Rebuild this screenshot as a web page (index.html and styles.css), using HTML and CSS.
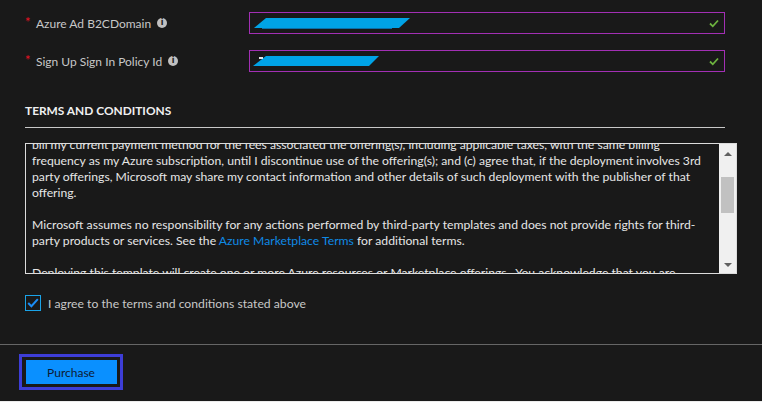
FILE: index.html
```html
<!DOCTYPE html>
<html>
<head>
<meta charset="utf-8">
<link rel="stylesheet" href="styles.css">
</head>
<body>
<div class="page">
  <div class="fields">
    <div class="row">
      <div class="label"><span class="req">*</span><span>Azure Ad B2CDomain</span><span class="info">i</span></div>
      <div class="input">
        <svg class="redact" width="160" height="14" viewBox="0 0 160 14"><polygon points="12,1 156,1 145,11 0,11" fill="#00a3e6"/><rect x="8" y="11" width="130" height="1" fill="#0b6fa8"/></svg>
        <svg class="check" width="10" height="9" viewBox="0 0 10 9"><path d="M1 4.5 L3.8 7.3 L9 1.5" fill="none" stroke="#6db33f" stroke-width="1.8"/></svg>
      </div>
    </div>
    <div class="row">
      <div class="label"><span class="req">*</span><span>Sign Up Sign In Policy Id</span><span class="info">i</span></div>
      <div class="input">
        <svg class="redact r2" width="130" height="14" viewBox="0 0 130 14"><polygon points="13,1 126,1 116,11 0,11" fill="#00a3e6"/><rect x="6" y="2" width="4" height="2" fill="#e6e6e6"/></svg>
        <svg class="check" width="10" height="9" viewBox="0 0 10 9"><path d="M1 4.5 L3.8 7.3 L9 1.5" fill="none" stroke="#6db33f" stroke-width="1.8"/></svg>
      </div>
    </div>
  </div>

  <div class="section-title">TERMS AND CONDITIONS</div>

  <div class="terms">
    <div class="terms-text">
      <p>bill my current payment method for the fees associated the offering(s), including applicable taxes, with the same billing<br>frequency as my Azure subscription, until I discontinue use of the offering(s); and (c) agree that, if the deployment involves 3rd<br>party offerings, Microsoft may share my contact information and other details of such deployment with the publisher of that<br>offering.</p>
      <p>Microsoft assumes no responsibility for any actions performed by third-party templates and does not provide rights for third-<br>party products or services. See the <a href="#">Azure Marketplace Terms</a> for additional terms.</p>
      <p>Deploying this template will create one or more Azure resources or Marketplace offerings.&nbsp; You acknowledge that you are<br>responsible for reviewing the applicable pricing and legal terms associated with all resources and offerings deployed.</p>
    </div>
    <div class="scrollbar">
      <span class="arrow up"></span>
      <span class="thumb"></span>
      <span class="arrow down"></span>
    </div>
  </div>

  <label class="agree">
    <span class="box"><svg width="12" height="10" viewBox="0 0 12 10"><path d="M1.2 5 L4.4 8.2 L10.8 1.2" fill="none" stroke="#1b8df5" stroke-width="2"/></svg></span>
    <span>I agree to the terms and conditions stated above</span>
  </label>

  <div class="footer">
    <div class="btn-frame"><button class="purchase">Purchase</button></div>
  </div>
</div>
</body>
</html>
```

FILE: styles.css
```css
html, body {
  margin: 0;
  padding: 0;
  background: #191919;
}
body {
  font-family: Lato, "Noto Sans", sans-serif;
  font-size: 12.2px;
  color: #d0d0d0;
  height: 402px;
  overflow: hidden;
}
.page {
  height: 401px;
  border-bottom: 1px solid #ececec;
  display: flex;
  flex-direction: column;
}
.fields {
  padding: 12px 37px 0 25px;
  display: flex;
  flex-direction: column;
  gap: 16px;
}
.row {
  display: grid;
  grid-template-columns: 224px 1fr;
  height: 22px;
}
.label {
  display: flex;
  align-items: center;
  color: #c8c8c8;
  font-size: 12px;
}
.req {
  color: #e81123;
  width: 11px;
  font-size: 13px;
  position: relative;
  top: -1px;
}
.info {
  display: inline-flex;
  align-items: center;
  justify-content: center;
  width: 10px;
  height: 10px;
  margin-left: 6px;
  border-radius: 50%;
  background: #c0c0c0;
  color: #191919;
  font-weight: bold;
  font-size: 8px;
  line-height: 1;
  font-family: "DejaVu Sans", sans-serif;
}
.input {
  border: 1px solid #a22fb4;
  display: flex;
  align-items: center;
  justify-content: space-between;
  padding: 0 5px 0 4px;
}
.redact { display: block; margin-top: 1px; }
.redact.r2 { margin-left: -1px; }
.check { display: block; }
.section-title {
  margin: 31px 37px 0 25px;
  padding-bottom: 8px;
  border-bottom: 1px solid #c8c8c8;
  font-weight: bold;
  font-size: 11.9px;
  color: #f0f0f0;
  line-height: 16px;
}
.terms {
  margin: 15px 25px 0 25px;
  height: 129px;
  border: 1px solid #dcdcdc;
  display: flex;
  overflow: hidden;
}
.terms-text {
  flex: 1;
  padding: 0 6px;
  overflow: hidden;
  font-size: 12.2px;
  line-height: 16px;
  color: #e6e6e6;
}
.terms-text p {
  margin: 0 0 16px 0;
  white-space: nowrap;
}
.terms-text p:first-child {
  margin-top: -7px;
}
.terms-text a {
  color: #0f8ae6;
  text-decoration: none;
}
.scrollbar {
  width: 17px;
  background: #f0f0f0;
  display: flex;
  flex-direction: column;
  align-items: center;
}
.arrow {
  width: 0;
  height: 0;
  border-left: 4px solid transparent;
  border-right: 4px solid transparent;
}
.arrow.up {
  margin-top: 8px;
  border-bottom: 4px solid #606060;
}
.arrow.down {
  margin-top: auto;
  margin-bottom: 6px;
  border-top: 4px solid #606060;
}
.thumb {
  width: 13px;
  height: 36px;
  margin-top: 21px;
  background: #c1c1c1;
}
.agree {
  margin: 21px 25px 0 25px;
  display: flex;
  align-items: center;
  gap: 7px;
  color: #c8c8c8;
  font-size: 12.2px;
}
.box {
  width: 14px;
  height: 14px;
  border: 1px solid #1aa3e8;
  display: flex;
  align-items: center;
  justify-content: center;
}
.box svg { display: block; }
.footer {
  margin-top: 33px;
  border-top: 1px solid #666;
  padding: 9px 0 0 19px;
}
.btn-frame {
  width: 98px;
  height: 30px;
  border: 3px solid #3d3dd6;
  display: flex;
  align-items: center;
  justify-content: center;
}
.purchase {
  width: 91px;
  height: 24px;
  background: #0a90ff;
  border: none;
  color: #0d1a33;
  font-family: Lato, "Noto Sans", sans-serif;
  font-size: 12px;
  padding: 0;
}
```
